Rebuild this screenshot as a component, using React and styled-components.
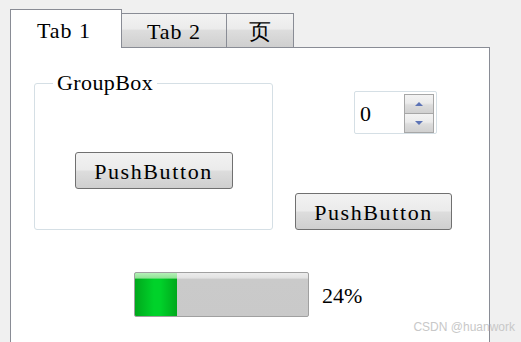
import React from "react";
import styled, { createGlobalStyle } from "styled-components";

const GlobalStyle = createGlobalStyle`
  html, body {
    margin: 0;
    padding: 0;
    background: #f0f0f0;
    overflow: hidden;
  }
  body {
    font-family: "Liberation Serif", "Times New Roman", serif;
    color: #000;
  }
`;

const Window = styled.div`
  position: relative;
  width: 521px;
  height: 342px;
  overflow: hidden;
  background: #f0f0f0;
`;

const TabBar = styled.div`
  display: flex;
  align-items: flex-end;
  padding: 9px 0 0 10px;
  margin-bottom: -1px;
`;

const Tab = styled.div`
  box-sizing: border-box;
  display: flex;
  align-items: center;
  justify-content: center;
  font-size: 22px;
  letter-spacing: 1px;
  border: 1px solid #898c95;
  border-bottom: none;
  ${(p) =>
    p.$active
      ? `
    position: relative;
    z-index: 1;
    height: 39px;
    background: #fff;
    padding: 4px 4px 0 0;
  `
      : `
    height: 34px;
    margin-bottom: 1px;
    border-left: none;
    background: linear-gradient(#f3f3f3 0%, #ebebeb 45%, #dddddd 50%, #cfcfcf 100%);
    padding-top: 2px;
  `}
  width: ${(p) => p.$width}px;
`;

const Pane = styled.div`
  box-sizing: border-box;
  margin-left: 10px;
  width: 480px;
  height: 320px;
  background: #fff;
  border: 1px solid #898c95;
  padding: 35px 0 0 23px;
`;

const TopRow = styled.div`
  display: flex;
  align-items: stretch;
`;

const GroupBox = styled.div`
  position: relative;
  box-sizing: border-box;
  width: 239px;
  height: 147px;
  border: 1px solid #d5dfe5;
  border-radius: 3px;
  display: flex;
  justify-content: center;
  padding-top: 68px;
`;

const GroupTitle = styled.span`
  position: absolute;
  top: -14px;
  left: 18px;
  padding: 0 4px;
  background: #fff;
  font-size: 22px;
  letter-spacing: 0.4px;
  line-height: 26px;
`;

const Button = styled.button`
  box-sizing: border-box;
  width: ${(p) => p.$width || 158}px;
  height: 37px;
  border: 1px solid #707070;
  border-radius: 3px;
  background: linear-gradient(#f2f2f2 0%, #ebebeb 48%, #dddddd 52%, #cfcfcf 100%);
  font-family: "Liberation Serif", "Times New Roman", serif;
  font-size: 22px;
  letter-spacing: 1.6px;
  color: #000;
  padding: 2px 0 0;
  cursor: default;
`;

const SideColumn = styled.div`
  display: flex;
  flex-direction: column;
  justify-content: space-between;
  margin-left: 22px;
  width: 157px;
`;

const SpinBox = styled.div`
  box-sizing: border-box;
  width: 83px;
  height: 43px;
  margin: 8px 0 0 59px;
  border: 1px solid #d5dfe5;
  border-radius: 2px;
  display: flex;
  align-items: center;
  justify-content: space-between;
  padding: 2px 2px 1px 5px;
`;

const SpinValue = styled.span`
  font-size: 22px;
  padding-top: 2px;
`;

const SpinButtons = styled.div`
  display: flex;
  flex-direction: column;
  width: 30px;
  height: 39px;
`;

const SpinButton = styled.div`
  flex: 1;
  display: flex;
  align-items: center;
  justify-content: center;
  border: 1px solid #a7a7a7;
  ${(p) => (p.$down ? "border-top: none;" : "")}
  background: linear-gradient(#f3f3f3 0%, #ebebeb 45%, #dddddd 55%, #d0d0d0 100%);
`;

const Arrow = styled.span`
  width: 0;
  height: 0;
  border-left: 4px solid transparent;
  border-right: 4px solid transparent;
  ${(p) =>
    p.$down
      ? "border-top: 4px solid #5d74b6;"
      : "border-bottom: 4px solid #5d74b6;"}
`;

const ProgressRow = styled.div`
  display: flex;
  align-items: center;
  margin: 42px 0 0 100px;
  gap: 13px;
`;

const ProgressTrack = styled.div`
  box-sizing: border-box;
  width: 175px;
  height: 45px;
  border: 1px solid #a0a0a0;
  border-radius: 2px;
  overflow: hidden;
  background: linear-gradient(#ececec 0%, #e2e2e2 12%, #cacaca 14%, #c9c9c9 100%);
  display: flex;
`;

const ProgressChunk = styled.div`
  height: 100%;
  background:
    linear-gradient(#b6f0b8 0%, #8fe394 12%, transparent 14%),
    linear-gradient(90deg, #00a81c 0%, #00d22a 45%, #00d22a 60%, #00a81c 100%);
`;

const ProgressLabel = styled.span`
  font-size: 22px;
  padding-top: 2px;
`;

const Watermark = styled.span`
  position: absolute;
  right: 6px;
  bottom: 8px;
  font-family: "Liberation Sans", Arial, sans-serif;
  font-size: 12px;
  color: #c8c8c8;
`;

export default function App() {
  const value = 24;
  return (
    <Window>
      <GlobalStyle />
      <TabBar>
        <Tab $active $width={112}>Tab 1</Tab>
        <Tab $width={105}>Tab 2</Tab>
        <Tab $width={67}>页</Tab>
      </TabBar>
      <Pane>
        <TopRow>
          <GroupBox>
            <GroupTitle>GroupBox</GroupTitle>
            <Button>PushButton</Button>
          </GroupBox>
          <SideColumn>
            <SpinBox>
              <SpinValue>0</SpinValue>
              <SpinButtons>
                <SpinButton>
                  <Arrow />
                </SpinButton>
                <SpinButton $down>
                  <Arrow $down />
                </SpinButton>
              </SpinButtons>
            </SpinBox>
            <Button $width={157}>PushButton</Button>
          </SideColumn>
        </TopRow>
        <ProgressRow>
          <ProgressTrack>
            <ProgressChunk style={{ width: `${value}%` }} />
          </ProgressTrack>
          <ProgressLabel>{value}%</ProgressLabel>
        </ProgressRow>
      </Pane>
      <Watermark>CSDN @huanwork</Watermark>
    </Window>
  );
}
